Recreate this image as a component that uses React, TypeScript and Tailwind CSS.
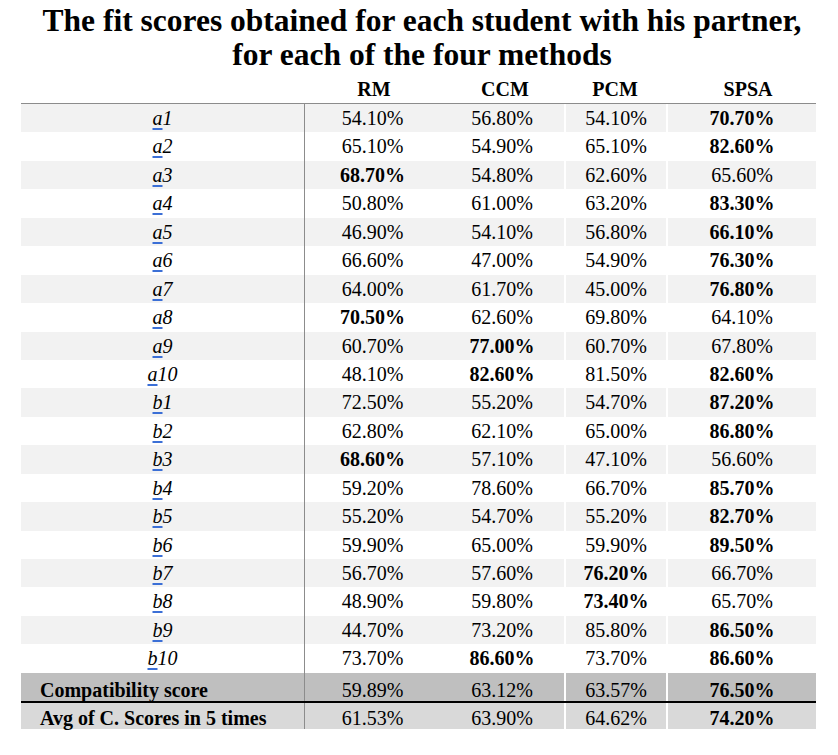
const serif = "font-[family-name:'Liberation_Serif','Times_New_Roman',serif]";

type Row = { label: string; vals: string[]; bold: number[] };

const rows: Row[] = [
  { label: "a1", vals: ["54.10%", "56.80%", "54.10%", "70.70%"], bold: [3] },
  { label: "a2", vals: ["65.10%", "54.90%", "65.10%", "82.60%"], bold: [3] },
  { label: "a3", vals: ["68.70%", "54.80%", "62.60%", "65.60%"], bold: [0] },
  { label: "a4", vals: ["50.80%", "61.00%", "63.20%", "83.30%"], bold: [3] },
  { label: "a5", vals: ["46.90%", "54.10%", "56.80%", "66.10%"], bold: [3] },
  { label: "a6", vals: ["66.60%", "47.00%", "54.90%", "76.30%"], bold: [3] },
  { label: "a7", vals: ["64.00%", "61.70%", "45.00%", "76.80%"], bold: [3] },
  { label: "a8", vals: ["70.50%", "62.60%", "69.80%", "64.10%"], bold: [0] },
  { label: "a9", vals: ["60.70%", "77.00%", "60.70%", "67.80%"], bold: [1] },
  { label: "a10", vals: ["48.10%", "82.60%", "81.50%", "82.60%"], bold: [1, 3] },
  { label: "b1", vals: ["72.50%", "55.20%", "54.70%", "87.20%"], bold: [3] },
  { label: "b2", vals: ["62.80%", "62.10%", "65.00%", "86.80%"], bold: [3] },
  { label: "b3", vals: ["68.60%", "57.10%", "47.10%", "56.60%"], bold: [0] },
  { label: "b4", vals: ["59.20%", "78.60%", "66.70%", "85.70%"], bold: [3] },
  { label: "b5", vals: ["55.20%", "54.70%", "55.20%", "82.70%"], bold: [3] },
  { label: "b6", vals: ["59.90%", "65.00%", "59.90%", "89.50%"], bold: [3] },
  { label: "b7", vals: ["56.70%", "57.60%", "76.20%", "66.70%"], bold: [2] },
  { label: "b8", vals: ["48.90%", "59.80%", "73.40%", "65.70%"], bold: [2] },
  { label: "b9", vals: ["44.70%", "73.20%", "85.80%", "86.50%"], bold: [3] },
  { label: "b10", vals: ["73.70%", "86.60%", "73.70%", "86.60%"], bold: [1, 3] },
];

const cols = "grid grid-cols-[283px_136px_124px_102px_150px]";

// separators per value column: RM has the grey rule, PCM/SPSA a thin white gap
const sep = [
  "border-l border-[#8c8c8c]",
  "",
  "border-l-2 border-white",
  "border-l-2 border-white",
];

function Label({ text }: { text: string }) {
  return (
    <span className="italic">
      <span className="underline decoration-[#3b6fd6] decoration-[1.5px] underline-offset-[3px]">
        {text[0]}
      </span>
      {text.slice(1)}
    </span>
  );
}

function SummaryRow({
  label,
  vals,
  bg,
  top,
}: {
  label: string;
  vals: string[];
  bg: string;
  top?: boolean;
}) {
  return (
    <div className={`${cols} h-[28px] ${bg} ${top ? "border-t-2 border-black" : ""}`}>
      <div className="flex items-end pl-[19px] font-bold leading-[22px]">{label}</div>
      {vals.map((v, i) => (
        <div
          key={i}
          className={`flex items-end justify-center leading-[22px] ${sep[i]} ${
            i === 3 ? "font-bold" : ""
          }`}
        >
          {v}
        </div>
      ))}
    </div>
  );
}

export default function App() {
  return (
    <div className={`w-[838px] h-[755px] bg-white text-black ${serif}`}>
      <h1 className="pt-[4px] pl-[6px] text-center text-[31.5px] font-bold leading-[34px]">
        The fit scores obtained for each student with his partner,
        <br />
        for each of the four methods
      </h1>

      <div className="ml-[21px] w-[795px] text-[20px]">
        <div className={`${cols} h-[32px] border-b-[1.5px] border-[#8c8c8c] font-bold leading-[28px]`}>
          <div />
          <div className="flex items-end justify-center pl-[4px]">RM</div>
          <div className="flex items-end justify-center pl-[6px]">CCM</div>
          <div className="flex items-end justify-center">PCM</div>
          <div className="flex items-end justify-center pl-[14px]">SPSA</div>
        </div>

        {rows.map((r, idx) => (
          <div
            key={r.label}
            className={`${cols} h-[28.45px] leading-[28.45px] ${
              idx % 2 === 0 ? "bg-[#f2f2f2]" : "bg-white"
            }`}
          >
            <div className="text-center">
              <Label text={r.label} />
            </div>
            {r.vals.map((v, i) => (
              <div
                key={i}
                className={`text-center ${sep[i]} ${r.bold.includes(i) ? "font-bold" : ""}`}
              >
                {v}
              </div>
            ))}
          </div>
        ))}

        <SummaryRow
          label="Compatibility score"
          vals={["59.89%", "63.12%", "63.57%", "76.50%"]}
          bg="bg-[#bfbfbf]"
        />
        <SummaryRow
          label="Avg of C. Scores in 5 times"
          vals={["61.53%", "63.90%", "64.62%", "74.20%"]}
          bg="bg-[#d9d9d9]"
          top
        />
      </div>
    </div>
  );
}
